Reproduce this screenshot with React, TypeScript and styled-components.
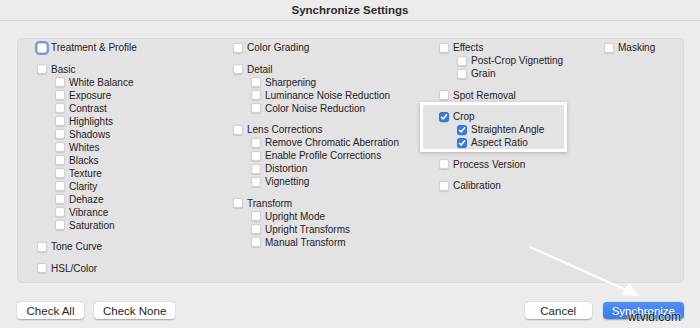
import styled, { createGlobalStyle } from 'styled-components';

const GlobalStyle = createGlobalStyle`
    body {
        margin: 0;
        background: #ececec;
        font-family: "Liberation Sans", Arial, sans-serif;
    }
`;

const Window = styled.div`
    position: relative;
    width: 700px;
    height: 328px;
    display: flex;
    flex-direction: column;
    background: #ececec;
    color: #262626;
    overflow: hidden;
`;

const TitleBar = styled.div`
    height: 21px;
    box-sizing: border-box;
    border-bottom: 1px solid #d4d4d4;
    display: flex;
    align-items: center;
    justify-content: center;
    font-size: 11.5px;
    font-weight: bold;
    color: #2b2b2b;
    background: #ebebeb;
`;

const Content = styled.div`
    display: flex;
    flex-direction: column;
    padding: 17px 16px 0 17px;
`;

const Panel = styled.div`
    height: 245px;
    box-sizing: border-box;
    background: #e3e3e3;
    border: 1px solid #dadada;
    border-radius: 5px;
    padding: 2px 0 0 19px;
    display: grid;
    grid-template-columns: 196px 206px 165px 1fr;
`;

const Column = styled.div`
    display: flex;
    flex-direction: column;
    row-gap: 8.6px;
`;

const Group = styled.div<{ $highlight?: boolean }>`
    position: relative;
    display: flex;
    flex-direction: column;

    ${(p) =>
        p.$highlight &&
        `
        &::before {
            content: '';
            position: absolute;
            top: -8px;
            left: -19px;
            width: 147px;
            height: 50px;
            box-sizing: border-box;
            border: 3px solid #ffffff;
            box-shadow: 0 1px 4px rgba(0, 0, 0, 0.22);
            pointer-events: none;
        }
    `}
`;

const Row = styled.label<{ $child?: boolean }>`
    height: 13px;
    display: flex;
    align-items: center;
    column-gap: 4px;
    padding-left: ${(p) => (p.$child ? '18px' : '0')};
    font-size: 10px;
    color: #222222;
    white-space: nowrap;
`;

const Box = styled.span<{ $checked?: boolean; $focused?: boolean }>`
    width: 10px;
    height: 10px;
    flex: none;
    box-sizing: border-box;
    border-radius: 2.5px;
    display: flex;
    align-items: center;
    justify-content: center;
    background: ${(p) => (p.$checked ? '#3a78e6' : '#ffffff')};
    border: 0.5px solid ${(p) => (p.$checked ? '#3470d8' : '#d0d0d0')};
    box-shadow: ${(p) =>
        p.$focused ? '0 0 0 2px #7b9be0' : '0 0.5px 1px rgba(0, 0, 0, 0.12)'};
`;

const Footer = styled.div`
    margin-top: 19px;
    display: flex;
    justify-content: space-between;
`;

const ButtonGroup = styled.div<{ $gap: number }>`
    display: flex;
    column-gap: ${(p) => p.$gap}px;
`;

const Button = styled.button<{ $primary?: boolean }>`
    height: 17px;
    min-width: 67px;
    padding: 0 9px;
    border: none;
    border-radius: 4px;
    font-family: "Liberation Sans", Arial, sans-serif;
    font-size: 11.5px;
    color: ${(p) => (p.$primary ? '#ffffff' : '#262626')};
    background: ${(p) =>
        p.$primary ? 'linear-gradient(#4f8ff5, #3b7bea)' : '#ffffff'};
    box-shadow: 0 0.5px 1.5px rgba(0, 0, 0, 0.3);
`;

const Annotation = styled.svg`
    position: absolute;
    left: 0;
    top: 0;
    pointer-events: none;
`;

const Watermark = styled.div`
    position: absolute;
    right: 19px;
    bottom: 4px;
    font-size: 12px;
    color: #111111;
    text-shadow: 0 0 2px #ffffff, 0 0 2px #ffffff;
`;

type Item = { label: string; checked?: boolean; focused?: boolean };
type GroupData = { main: Item; children?: Item[]; highlight?: boolean };

const columns: GroupData[][] = [
    [
        { main: { label: 'Treatment & Profile', focused: true } },
        {
            main: { label: 'Basic' },
            children: [
                'White Balance',
                'Exposure',
                'Contrast',
                'Highlights',
                'Shadows',
                'Whites',
                'Blacks',
                'Texture',
                'Clarity',
                'Dehaze',
                'Vibrance',
                'Saturation',
            ].map((label) => ({ label })),
        },
        { main: { label: 'Tone Curve' } },
        { main: { label: 'HSL/Color' } },
    ],
    [
        { main: { label: 'Color Grading' } },
        {
            main: { label: 'Detail' },
            children: [
                { label: 'Sharpening' },
                { label: 'Luminance Noise Reduction' },
                { label: 'Color Noise Reduction' },
            ],
        },
        {
            main: { label: 'Lens Corrections' },
            children: [
                { label: 'Remove Chromatic Aberration' },
                { label: 'Enable Profile Corrections' },
                { label: 'Distortion' },
                { label: 'Vignetting' },
            ],
        },
        {
            main: { label: 'Transform' },
            children: [
                { label: 'Upright Mode' },
                { label: 'Upright Transforms' },
                { label: 'Manual Transform' },
            ],
        },
    ],
    [
        {
            main: { label: 'Effects' },
            children: [{ label: 'Post-Crop Vignetting' }, { label: 'Grain' }],
        },
        { main: { label: 'Spot Removal' } },
        {
            main: { label: 'Crop', checked: true },
            children: [
                { label: 'Straighten Angle', checked: true },
                { label: 'Aspect Ratio', checked: true },
            ],
            highlight: true,
        },
        { main: { label: 'Process Version' } },
        { main: { label: 'Calibration' } },
    ],
    [{ main: { label: 'Masking' } }],
];

const Check = ({ item, child }: { item: Item; child?: boolean }) => (
    <Row $child={child}>
        <Box $checked={item.checked} $focused={item.focused}>
            {item.checked && (
                <svg width="8" height="8" viewBox="0 0 8 8">
                    <path
                        d="M1.4 4.2 L3.2 6 L6.6 1.8"
                        fill="none"
                        stroke="#ffffff"
                        strokeWidth="1.5"
                        strokeLinecap="round"
                        strokeLinejoin="round"
                    />
                </svg>
            )}
        </Box>
        {item.label}
    </Row>
);

const App = () => {
    return (
        <Window>
            <GlobalStyle />
            <TitleBar>Synchronize Settings</TitleBar>
            <Content>
                <Panel>
                    {columns.map((col, i) => (
                        <Column key={i}>
                            {col.map((group) => (
                                <Group key={group.main.label} $highlight={group.highlight}>
                                    <Check item={group.main} />
                                    {group.children?.map((c) => (
                                        <Check key={c.label} item={c} child />
                                    ))}
                                </Group>
                            ))}
                        </Column>
                    ))}
                </Panel>
                <Footer>
                    <ButtonGroup $gap={10}>
                        <Button>Check All</Button>
                        <Button>Check None</Button>
                    </ButtonGroup>
                    <ButtonGroup $gap={11}>
                        <Button>Cancel</Button>
                        <Button $primary>Synchronize</Button>
                    </ButtonGroup>
                </Footer>
            </Content>
            <Annotation width="700" height="328" viewBox="0 0 700 328">
                <line x1="530" y1="247" x2="626" y2="290" stroke="#ffffff" strokeWidth="2" />
                <polygon points="639,296 622,295 629,283" fill="#ffffff" />
            </Annotation>
            <Watermark>wtvid.com</Watermark>
        </Window>
    );
};

export default App;
